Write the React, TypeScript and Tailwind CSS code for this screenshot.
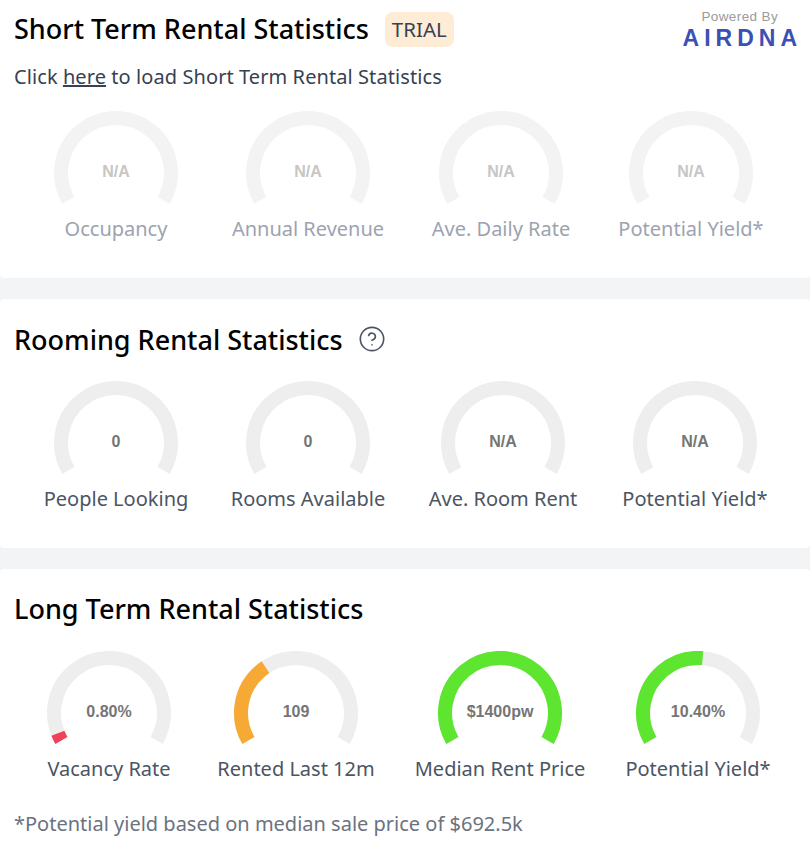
import React from "react";
import { CircleHelp } from "lucide-react";

const font = "font-['Noto_Sans',sans-serif]";

type GaugeProps = {
  label: string;
  value: string;
  percent?: number;
  color?: string;
  muted?: boolean;
};

const Gauge = ({ label, value, percent = 0, color, muted }: GaugeProps) => {
  // 240 degree arc, gap at the bottom
  const d = "M 15.4 89.5 A 55 55 0 1 1 110.6 89.5";

  return (
    <div className="flex flex-col items-center">
      <div className="relative h-[100px] w-[126px] shrink-0">
        <svg width="126" height="100" viewBox="0 0 126 100" className="block">
          <path d={d} fill="none" stroke={muted ? "#f3f3f3" : "#eeeeee"} strokeWidth="14" />
          {percent > 0 && (
            <path
              d={d}
              fill="none"
              stroke={color}
              strokeWidth="14"
              pathLength={100}
              strokeDasharray={`${percent} 100`}
            />
          )}
        </svg>
        <span
          className={`absolute left-0 right-0 top-[51px] text-center font-['Liberation_Sans',sans-serif] text-[16px] font-bold leading-[20px] ${
            muted ? "text-[#c6c6c6]" : "text-[#757575]"
          }`}
        >
          {value}
        </span>
      </div>
      <span
        className={`mt-[6px] whitespace-nowrap text-[20px] leading-[24px] ${
          muted ? "text-[#9ca3af]" : "text-[#4b5563]"
        }`}
      >
        {label}
      </span>
    </div>
  );
};

const App = () => {
  return (
    <div className={`h-[858px] w-[810px] overflow-hidden bg-[#f3f4f6] ${font}`}>
      <section className="h-[278px] rounded-b-[4px] bg-white">
        <div className="flex h-[65px] items-start pl-[14px]">
          <h2 className="mt-[11px] text-[27px] font-medium leading-[36px] text-black">
            Short Term Rental Statistics
          </h2>
          <span className="ml-[16px] mt-[12px] rounded-[8px] bg-[#feecd6] px-[7px] text-[20.5px] leading-[35px] text-[#374151]">
            TRIAL
          </span>
          <div className="ml-auto mr-[8px] mt-[10px] flex flex-col items-center font-['Liberation_Sans',sans-serif]">
            <span className="pr-[5px] text-[13.5px] leading-[14px] tracking-[0.4px] text-[#9a9a9a]">
              Powered By
            </span>
            <span className="mt-[4px] text-[23px] font-bold leading-[20px] tracking-[5px] text-[#3b50b5]">
              AIRDNA
            </span>
          </div>
        </div>
        <p className="pl-[14px] text-[20px] leading-[24px] tracking-[0.08px] text-[#374151]">
          Click <a className="underline">here</a> to load Short Term Rental Statistics
        </p>
        <div className="mt-[22px] grid grid-cols-[232px_152px_234px_146px] justify-items-center">
          <Gauge muted label="Occupancy" value="N/A" />
          <Gauge muted label="Annual Revenue" value="N/A" />
          <Gauge muted label="Ave. Daily Rate" value="N/A" />
          <Gauge muted label="Potential Yield*" value="N/A" />
        </div>
      </section>

      <section className="mt-[21px] h-[249px] rounded-[4px] bg-white">
        <div className="flex h-[82px] items-start pl-[14px]">
          <h2 className="mt-[23px] text-[27px] font-medium leading-[36px] text-black">
            Rooming Rental Statistics
          </h2>
          <CircleHelp size={28} strokeWidth={1.4} className="ml-[15px] mt-[26px] text-[#4b5563]" />
        </div>
        <div className="grid grid-cols-[232px_152px_238px_146px] justify-items-center">
          <Gauge label="People Looking" value="0" />
          <Gauge label="Rooms Available" value="0" />
          <Gauge label="Ave. Room Rent" value="N/A" />
          <Gauge label="Potential Yield*" value="N/A" />
        </div>
      </section>

      <section className="mt-[21px] h-[289px] rounded-t-[4px] bg-white">
        <div className="flex h-[82px] items-start pl-[14px]">
          <h2 className="mt-[22px] text-[27px] font-medium leading-[36px] text-black">
            Long Term Rental Statistics
          </h2>
        </div>
        <div className="grid grid-cols-[218px_156px_252px_144px] justify-items-center">
          <Gauge label="Vacancy Rate" value="0.80%" percent={3.5} color="#f0405a" />
          <Gauge label="Rented Last 12m" value="109" percent={36} color="#f7a935" />
          <Gauge label="Median Rent Price" value="$1400pw" percent={100} color="#5de52f" />
          <Gauge label="Potential Yield*" value="10.40%" percent={52} color="#5de52f" />
        </div>
        <p className="mt-[31px] pl-[14px] text-[20px] leading-[24px] text-[#6b7280]">
          *Potential yield based on median sale price of $692.5k
        </p>
      </section>
    </div>
  );
};

export default App;
